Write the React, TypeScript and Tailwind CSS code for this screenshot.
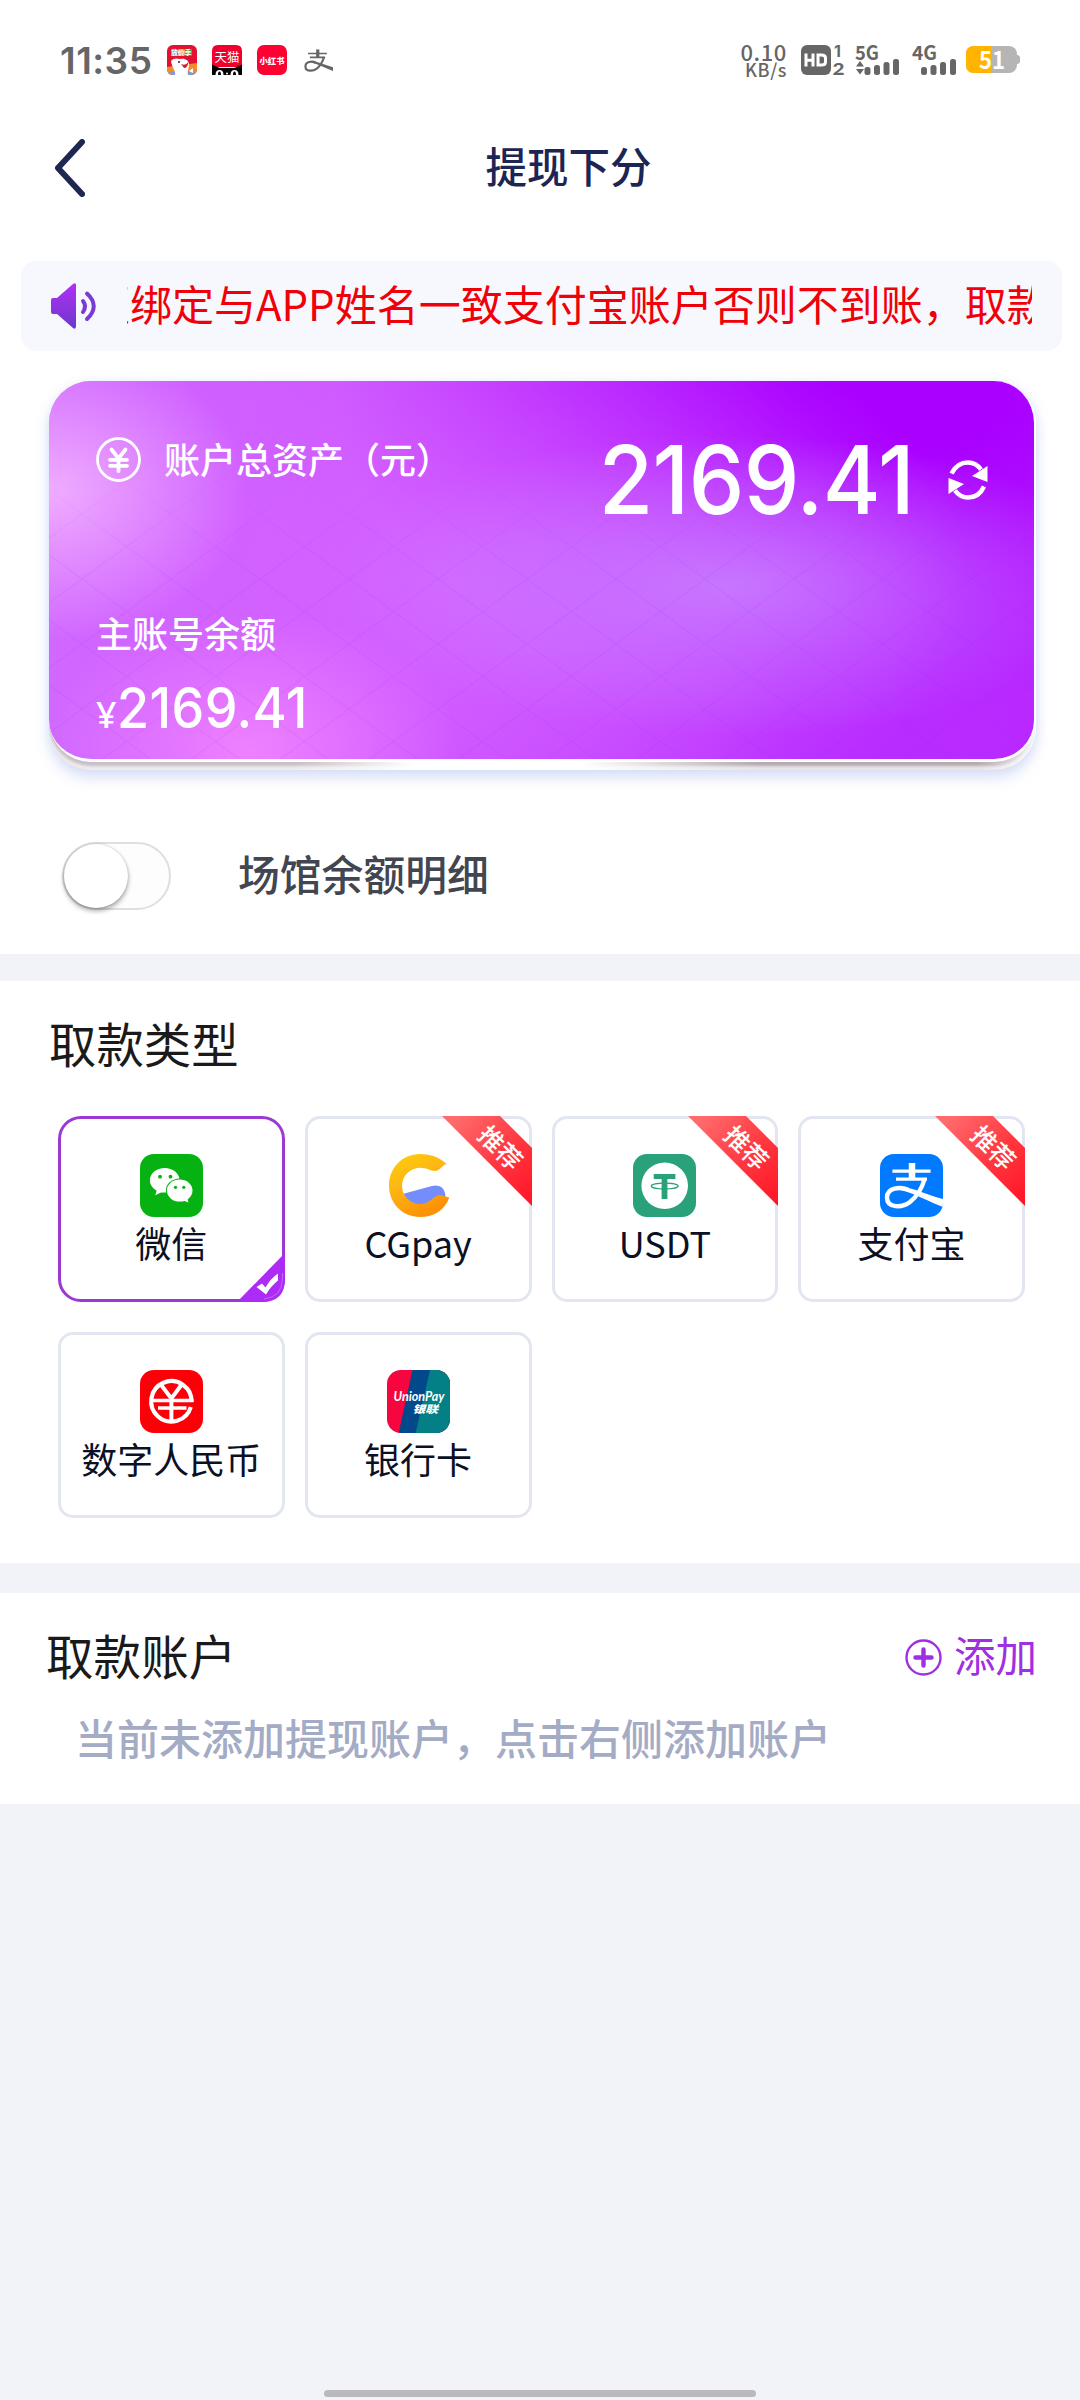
import React, { useState } from 'react';
import clsx from 'clsx';

type PayType = {
  id: string;
  label: string;
  icon: React.ReactNode;
  recommended?: boolean;
};

/* ---------- Status bar ---------- */

function AlipayMark({ className }: { className?: string }) {
  return (
    <svg viewBox="0 0 63 63" className={className} fill="none" stroke="currentColor">
      <path d="M32 9V25" strokeWidth="6.5" />
      <path d="M12.4 17.2H50.6M16 25.2H47" strokeWidth="3.2" />
      <path d="M44.8 24.5C42 34 37 42.500 30 48C22 54 7 54.500 7 43.500C7 33.500 20 32.500 28 35.500" strokeWidth="4.4" />
      <path d="M20 32.600C34 34 48 41.500 63 45V53C50 48.500 36 39.500 20 36Z" fill="currentColor" stroke="none" />
    </svg>
  );
}

function StatusBar() {
  return (
    <div className="flex h-[120px] items-center justify-between pl-[60px] pr-[60px] text-[#666666]">
      <div className="flex items-center">
        <span className="w-[92px] font-['Inter'] text-[37px] font-semibold leading-none tracking-[0.500px]">11:35</span>

        {/* Shopping dog */}
        <svg className="ml-[15px] overflow-visible" width="30" height="30" viewBox="0 0 30 30">
          <rect width="30" height="30" rx="6" fill="#e3112f" />
          <path d="M0 22L30 18V24Q30 30 24 30H6Q0 30 0 24Z" fill="#f58a2c" />
          <path d="M1 27H29Q27 30 24 30H6Q3 30 1 27Z" fill="#7d9fd0" />
          <rect x="4" y="4" width="7" height="7" rx="1" fill="#3c9be0" />
          <rect x="11" y="4" width="7" height="7" rx="1" fill="#f39a1f" />
          <rect x="18" y="4" width="7" height="7" rx="1" fill="#36a853" />
          <text x="4" y="10" fontSize="6.800" fontWeight="700" fill="#fff" fontFamily="Noto Sans CJK SC">放价季</text>
          <path d="M4 16C6 13 10 13 13 14C18 13 22 15 22 20C22 24 20 25 21 30H8C9 26 5 23 4 16Z" fill="#fff" />
          <path d="M14 19Q19 21 21 17Q21 23 17 23Z" fill="#d21f30" />
          <circle cx="12" cy="17" r="1" fill="#222" />
          <path d="M22 26L26 23V28Z" fill="#fff" />
        </svg>

        {/* Cat head */}
        <svg className="ml-[15px] overflow-visible" width="30" height="30" viewBox="0 0 30 30">
          <path d="M0 22V6Q0 0 6 0H24Q30 0 30 6V22Z" fill="#f0002f" />
          <path d="M0 19.500Q5 22 8 23H22Q25 22 30 19.500V30H0Z" fill="#000" />
          <text x="2.500" y="16.500" fontSize="12.500" fill="#fff" fontFamily="Noto Sans CJK SC">天猫</text>
          <path d="M3.500 30Q3.500 25 7.500 25T11.500 30Z" fill="#fff" />
          <path d="M18.500 30Q18.500 25 22.500 25T26.500 30Z" fill="#fff" />
          <path d="M6 30Q6 26.500 7.500 26.500T9 30ZM21 30Q21 26.500 22.500 26.500T24 30Z" fill="#000" />
          <circle cx="15" cy="28.500" r="1" fill="#fff" />
        </svg>

        <div className="ml-[15px] flex h-[30px] w-[30px] items-center justify-center rounded-[7px] bg-[#ff0033]">
          <span className="whitespace-nowrap font-['Noto_Sans_CJK_SC'] text-[8.300px] font-black leading-none text-white">小红书</span>
        </div>

        <AlipayMark className="ml-[15px] h-[31px] w-[31px]" />
      </div>

      <div className="flex items-center">
        <div className="flex w-[45px] flex-col items-end font-['Noto_Sans_CJK_SC'] font-medium">
          <span className="text-[22px] leading-[18px] tracking-[0.600px]">0.10</span>
          <span className="text-[18px] leading-[18px] tracking-[0.600px]">KB/s</span>
        </div>

        {/* HD voice badge for both SIM cards */}
        <svg className="ml-[14px] overflow-visible" width="44" height="30" viewBox="0 0 44 30">
          <rect width="30" height="30" rx="6" fill="#666" />
          <path d="M5 8.500V21.500M12 8.500V21.500M5 15.200H12M17 10H20.500Q24.500 10 24.500 13V17Q24.500 20 20.500 20H17Z" fill="none" stroke="#fff" strokeWidth="3" />
          <text x="33" y="12" fontSize="16" fontWeight="700" fill="#666" fontFamily="Inter">1</text>
          <text x="31.500" y="29.500" fontSize="17" fontWeight="900" fill="#666" fontFamily="Lato" textLength="12" lengthAdjust="spacingAndGlyphs">2</text>
        </svg>

        <svg className="ml-[10px] overflow-visible" width="46" height="30" viewBox="0 0 46 30">
          <text x="0" y="14.500" fontSize="19.500" fontWeight="700" fill="#666" fontFamily="Noto Sans CJK SC" textLength="24" lengthAdjust="spacingAndGlyphs">5G</text>
          <path d="M1 21.500L5 16L9 21.500ZM1 24L5 29.500L9 24Z" fill="#666" />
          <rect x="9.500" y="22" width="6" height="8" rx="2.500" fill="#666" />
          <rect x="19" y="20" width="6" height="10" rx="2.500" fill="#666" />
          <rect x="28.500" y="17" width="6" height="13" rx="2.500" fill="#666" />
          <rect x="38" y="14" width="6" height="16" rx="2.500" fill="#666" />
        </svg>

        <svg className="ml-[11px] overflow-visible" width="46" height="30" viewBox="0 0 46 30">
          <text x="0" y="14.500" fontSize="19.500" fontWeight="700" fill="#666" fontFamily="Noto Sans CJK SC" textLength="25" lengthAdjust="spacingAndGlyphs">4G</text>
          <rect x="9" y="22" width="6" height="8" rx="2.500" fill="#666" />
          <rect x="18.500" y="20" width="6" height="10" rx="2.500" fill="#666" />
          <rect x="28" y="17" width="6" height="13" rx="2.500" fill="#666" />
          <rect x="38" y="14" width="6" height="16" rx="2.500" fill="#666" />
        </svg>

        <svg className="ml-[8px] overflow-visible" width="54" height="28" viewBox="0 0 54 28">
          <rect x="48" y="9" width="6" height="9" rx="3" fill="#b5b5b5" />
          <rect width="51" height="27" rx="8" fill="#b5b5b5" />
          <path d="M26 0H8Q0 0 0 8V19Q0 27 8 27H26Z" fill="#ffb400" />
          <text x="13" y="22.500" fontSize="24" fontWeight="700" fill="#fff" fontFamily="Noto Sans CJK SC" textLength="26" lengthAdjust="spacingAndGlyphs">51</text>
        </svg>
      </div>
    </div>
  );
}

/* ---------- Payment logos ---------- */

function WechatLogo() {
  return (
    <svg width="63" height="63" viewBox="0 0 63 63">
      <rect width="63" height="63" rx="14" fill="#06b211" />
      <ellipse cx="24.700" cy="26.300" rx="14.800" ry="12.300" fill="#fff" />
      <path d="M17 35L15.300 41.300L23 37.500Z" fill="#fff" />
      <ellipse cx="39.700" cy="36.600" rx="13.800" ry="12" fill="#06b211" />
      <ellipse cx="39.700" cy="36.600" rx="12.800" ry="11" fill="#fff" />
      <path d="M42 46L48.500 48.500L47 43.500Z" fill="#fff" />
      <circle cx="20" cy="22.700" r="1.900" fill="#06b211" />
      <circle cx="30.500" cy="22.700" r="1.900" fill="#06b211" />
      <circle cx="35.500" cy="33.300" r="1.600" fill="#06b211" />
      <circle cx="43.800" cy="33.300" r="1.600" fill="#06b211" />
    </svg>
  );
}

function CgpayLogo() {
  return (
    <svg width="63" height="63" viewBox="0 0 63 63">
      <defs>
        <linearGradient id="cg-ring" x1="0" y1="0" x2="0.500" y2="1">
          <stop offset="0" stopColor="#ffcf0a" />
          <stop offset="0.450" stopColor="#fdb813" />
          <stop offset="1" stopColor="#fd9206" />
        </linearGradient>
      </defs>
      <path d="M16.500 39.800L45 32C52 30 58.500 33.500 58.500 43L46 53H24Z" fill="#748dfb" />
      <path
        d="M59.600 10C53 3.500 44 0 33 0C15 0 2 14 2 31.500C2 49 15 63 33 63C47 63 58 56 62.300 43.500C58 42.500 54 39.500 48.500 42.500C43 46 41 50 33 50C23 50 15 42 15 32C15 22 23 13.700 33 13.700C40 13.700 43 16.800 48 17C53 17 55 11 59.600 10Z"
        fill="url(#cg-ring)"
      />
    </svg>
  );
}

function UsdtLogo() {
  return (
    <svg width="63" height="63" viewBox="0 0 63 63">
      <rect width="63" height="63" rx="14" fill="#29a27b" />
      <circle cx="31.700" cy="31.700" r="23.300" fill="#fff" />
      <path d="M20.700 20H42.400V25H34.400V45H28.600V25H20.700Z" fill="#29a27b" />
      <ellipse cx="31.700" cy="32" rx="13.400" ry="2.900" fill="none" stroke="#29a27b" strokeWidth="1.300" />
    </svg>
  );
}

function AlipayLogo() {
  return (
    <div className="h-[63px] w-[63px] overflow-hidden rounded-[14px] bg-[#027aff] text-white">
      <AlipayMark className="h-[63px] w-[63px]" />
    </div>
  );
}

function DigitalYuanLogo() {
  return (
    <svg width="63" height="63" viewBox="0 0 63 63" fill="none" stroke="#fff">
      <rect width="63" height="63" rx="14" fill="#fb0007" stroke="none" />
      <path d="M51.600 32A20.200 20.200 0 1 0 50.800 37" strokeWidth="4.200" />
      <path d="M21.500 15.500L31.400 28.500L41 15.500M31.400 27V52" strokeWidth="4" />
      <path d="M12 30.500H53.500M18 38H46.500" strokeWidth="3.600" />
    </svg>
  );
}

function UnionPayLogo() {
  return (
    <svg width="63" height="63" viewBox="0 0 63 63" className="rounded-[14px]">
      <rect width="63" height="63" fill="#f6053f" />
      <path d="M25.500 0H63V63H11.700Z" fill="#02488a" />
      <path d="M43 0H63V63H28.600Z" fill="#028085" />
      <g fill="#fff" fontStyle="italic">
        <text x="6.500" y="31" fontSize="13" fontWeight="700" fontFamily="Lato" textLength="51" lengthAdjust="spacingAndGlyphs">UnionPay</text>
        <text x="25.500" y="42.500" fontSize="10.500" fontWeight="900" fontFamily="Noto Sans CJK SC" textLength="25.500" lengthAdjust="spacingAndGlyphs">银联</text>
      </g>
    </svg>
  );
}

const PAY_TYPES: PayType[] = [
  { id: 'wechat', label: '微信', icon: <WechatLogo /> },
  { id: 'cgpay', label: 'CGpay', icon: <CgpayLogo />, recommended: true },
  { id: 'usdt', label: 'USDT', icon: <UsdtLogo />, recommended: true },
  { id: 'alipay', label: '支付宝', icon: <AlipayLogo />, recommended: true },
  { id: 'ecny', label: '数字人民币', icon: <DigitalYuanLogo /> },
  { id: 'bank', label: '银行卡', icon: <UnionPayLogo /> },
];

/* ---------- Blocks ---------- */

function Ribbon() {
  return (
    <svg className="absolute -right-[3px] -top-[3px]" width="90" height="90" viewBox="0 0 90 90">
      <defs>
        <linearGradient id="ribbon" x1="0" y1="0" x2="1" y2="1">
          <stop offset="0.100" stopColor="#ff6a6c" />
          <stop offset="0.550" stopColor="#ff3840" />
          <stop offset="1" stopColor="#ff1426" />
        </linearGradient>
      </defs>
      <path d="M0 0H58L90 32V90Z" fill="url(#ribbon)" />
      <text
        transform="translate(58 32) rotate(45)"
        textAnchor="middle"
        y="9"
        fontSize="25"
        fontWeight="500"
        fill="#fff"
        fontFamily="Noto Sans CJK SC"
      >
        推荐
      </text>
    </svg>
  );
}

function PayTile({ item, active, onSelect }: { item: PayType; active: boolean; onSelect: () => void }) {
  return (
    <button
      onClick={onSelect}
      className={clsx(
        'relative flex h-[186px] flex-col items-center border-[3px] bg-white pt-[35px]',
        active ? 'rounded-[23px] border-[#9c38d3]' : 'rounded-[15px] border-[#e2e6f1]'
      )}
    >
      {item.icon}
      <span className="mt-[7px] whitespace-nowrap text-[36px] leading-[36px] text-[#0b1025]">{item.label}</span>
      {item.recommended && <Ribbon />}
      {active && (
        <svg className="absolute -bottom-[3px] -right-[3px]" width="48" height="49" viewBox="0 0 48 49">
          <path d="M48 0V26Q48 49 25 49H0Z" fill="#ac2cf5" />
          <path d="M45.500 20V26Q45 44 27 46" stroke="#c466fa" strokeWidth="1" fill="none" />
          <path d="M19.500 34L25 30.500L28.500 34.500Q33 26 41 20.500V27.500Q34 33 29 41.500Z" fill="#fff" />
        </svg>
      )}
    </button>
  );
}

function BalanceCard() {
  return (
    <div className="ml-[49px] mr-[44px] mt-[30px] h-[389px] rounded-[42px] bg-[linear-gradient(90deg,#c9bfc6_4%,#c9bfc6_25%,#ffffff_37%,#ffffff_54%,#b4a9b1_72%,#b4a9b1_94%,#f4f0f4_100%)] shadow-[0_8px_14px_rgba(150,170,235,0.350),0_0_8px_rgba(190,205,245,0.250),inset_0_-4px_3px_rgba(255,255,255,0.700)]">
      <div className="relative h-[381px] overflow-hidden rounded-[42px] border-b-[3px] border-r-2 border-white bg-[radial-gradient(ellipse_200px_150px_at_0px_110px,rgba(245,184,255,0.850),transparent),radial-gradient(ellipse_210px_140px_at_200px_370px,rgba(246,138,255,0.800),transparent),radial-gradient(ellipse_400px_150px_at_680px_205px,rgba(200,128,255,0.850),transparent),radial-gradient(ellipse_500px_300px_at_420px_200px,rgba(214,104,255,0.800),transparent),radial-gradient(ellipse_560px_330px_at_850px_0px,#aa00ff_20%,transparent),linear-gradient(90deg,#d068ff_0%,#cc50ff_40%,#b82eff_75%,#b929ff_100%)]">
        {/* Faint diamond mesh */}
        <svg className="absolute inset-0 h-full w-full" aria-hidden="true">
          <defs>
            <pattern id="mesh" x="33" y="3" width="89" height="65" patternUnits="userSpaceOnUse">
              <path d="M0 0L89 65M89 0L0 65" stroke="#a020e0" strokeOpacity="0.070" strokeWidth="1.500" />
            </pattern>
            <linearGradient id="mesh-fade" x1="0" y1="0" x2="0" y2="1">
              <stop offset="0.200" stopColor="#000" />
              <stop offset="0.500" stopColor="#fff" />
            </linearGradient>
            <mask id="mesh-mask">
              <rect width="100%" height="100%" fill="url(#mesh-fade)" />
            </mask>
          </defs>
          <rect width="100%" height="100%" fill="url(#mesh)" mask="url(#mesh-mask)" />
        </svg>

        <div className="relative flex h-full flex-col pl-[47px] text-white">
          <div className="mt-[54px] flex h-[90px] items-start justify-between pr-[46px]">
            <div className="flex items-center pt-[2px]">
              <svg width="45" height="45" viewBox="0 0 45 45" fill="none" stroke="currentColor">
                <circle cx="22.500" cy="22.500" r="21" strokeWidth="2.800" />
                <path d="M15.500 12.500L22.500 21.500L29.500 12.500M22.500 21.500V34M14 22.800H31M14 28.800H31" strokeWidth="3.800" strokeLinecap="round" />
              </svg>
              <span className="ml-[23px] pb-[4px] text-[36px] font-medium leading-[38px]">账户总资产（元）</span>
            </div>
            <div className="flex h-[90px] items-center">
              <span className="origin-right scale-x-[0.930] font-['Inter'] text-[95px] font-medium leading-[90px] tracking-[-0.600px]">2169.41</span>
              <svg className="ml-[34px]" width="40" height="40" viewBox="0 0 40 40" fill="none" stroke="currentColor">
                <path d="M3.500 13.500Q9 2.500 20 2.500Q28 2.500 33 9.500M36 26.500Q31 37.500 20 37.500Q12 37.500 7 30.500" strokeWidth="4.500" />
                <path d="M39.500 6V22L24 16ZM0.500 34V18L16 24Z" fill="currentColor" stroke="none" />
              </svg>
            </div>
          </div>

          <span className="mt-[89px] text-[36px] font-medium leading-[36px]">主账号余额</span>
          <div className="mt-[28px] flex items-baseline leading-[60px]">
            <span className="font-['Noto_Sans'] text-[36px] font-medium leading-[60px]">¥</span>
            <span className="origin-left scale-x-[0.930] font-['Inter'] text-[56px] font-medium leading-[60px] tracking-[0.400px]">2169.41</span>
          </div>
        </div>
      </div>
    </div>
  );
}

export default function App() {
  const [selected, setSelected] = useState('wechat');
  const [showVenues, setShowVenues] = useState(false);

  return (
    <div className="flex h-[2400px] w-[1080px] flex-col overflow-hidden bg-[#f2f3f9] font-['Noto_Sans_CJK_SC',sans-serif]">
      <section className="bg-white pb-[44px]">
        <StatusBar />

        <header className="flex h-[96px] items-center pl-[55px] pr-[30px]">
          <svg width="30" height="58" viewBox="0 0 30 58" fill="none">
            <path d="M27 3L3 29L27 55" stroke="#1e274f" strokeWidth="6" strokeLinecap="round" strokeLinejoin="round" />
          </svg>
          <h1 className="flex-1 pb-[4px] pl-[2px] text-center text-[41.500px] font-medium leading-none text-[#1c2554]">提现下分</h1>
        </header>

        {/* Scrolling notice */}
        <div className="ml-[21px] mr-[18px] mt-[45px] flex h-[90px] items-center rounded-[15px] bg-[#f7f8fe] pl-[30px] pr-[30px]">
          <svg className="shrink-0" width="45" height="46" viewBox="0 0 45 46" fill="none">
            <defs>
              <linearGradient id="horn" x1="0" y1="0" x2="0" y2="1">
                <stop offset="0" stopColor="#b32ff5" />
                <stop offset="1" stopColor="#6a38cc" />
              </linearGradient>
            </defs>
            <path d="M2 15H6L22 1Q25 -1 25 2V43Q25 47 22 45L6 31H2Q0 31 0 29V17Q0 15 2 15Z" fill="url(#horn)" />
            <path d="M32 18Q36 23 32 29" stroke="#7a3ad6" strokeWidth="4" strokeLinecap="round" />
            <path d="M36 10.500Q49.500 23 36 36" stroke="#7a3ad6" strokeWidth="4" strokeLinecap="round" />
          </svg>
          <div className="ml-[31px] flex-1 overflow-hidden">
            <p className="-ml-[39px] w-[1200px] whitespace-nowrap pb-[6px] text-[42px] leading-[56px] text-[#f00008]">
              须绑定与APP姓名一致支付宝账户否则不到账，取款
            </p>
          </div>
        </div>

        <BalanceCard />

        <div className="mt-[72px] flex h-[68px] items-center pl-[62px]">
          <button
            onClick={() => setShowVenues(!showVenues)}
            className={clsx(
              'flex h-[68px] w-[109px] items-center rounded-full border-2 border-[#dfdfdf] bg-[#fdfdfd]',
              showVenues && 'justify-end'
            )}
          >
            <span className="h-[64px] w-[64px] rounded-full bg-white shadow-[0_3px_5px_rgba(0,0,0,0.350),0_0_2px_rgba(0,0,0,0.200)]" />
          </button>
          <span className="ml-[67px] pb-[4px] text-[41.800px] font-medium leading-none text-[#414651]">场馆余额明细</span>
        </div>
      </section>

      <section className="mt-[27px] bg-white pb-[45px] pt-[37px]">
        <h2 className="relative top-px pl-[49px] text-[47.400px] leading-[48px] text-[#1a1a1a]">取款类型</h2>
        <div className="ml-[58px] mr-[55px] mt-[50px] grid grid-cols-4 gap-x-5 gap-y-[30px]">
          {PAY_TYPES.map((item) => (
            <PayTile key={item.id} item={item} active={selected === item.id} onSelect={() => setSelected(item.id)} />
          ))}
        </div>
      </section>

      <section className="mt-[30px] bg-white pb-[46px] pt-[37px]">
        <div className="flex h-[48px] items-center justify-between pl-[46px] pr-[43px]">
          <h2 className="relative top-px text-[47.600px] leading-[48px] text-[#1a1a1a]">取款账户</h2>
          <button className="flex items-center text-[#a02fe3]">
            <svg className="mt-[7px]" width="37" height="37" viewBox="0 0 37 37" fill="none" stroke="currentColor">
              <circle cx="18.500" cy="18.500" r="17" strokeWidth="2.400" />
              <path d="M18.500 10.500V26.500M10.500 18.500H26.500" strokeWidth="4.400" strokeLinecap="round" />
            </svg>
            <span className="ml-[12px] text-[41.500px] leading-[48px]">添加</span>
          </button>
        </div>
        <p className="mt-[38px] pl-[75px] text-[42px] font-medium leading-[42px] text-[#a4abc4]">
          当前未添加提现账户，点击右侧添加账户
        </p>
      </section>

      {/* Gesture bar */}
      <div className="mb-[3px] mt-auto h-[7px] w-[432px] self-center rounded-full bg-[#b9b9be]" />
    </div>
  );
}
